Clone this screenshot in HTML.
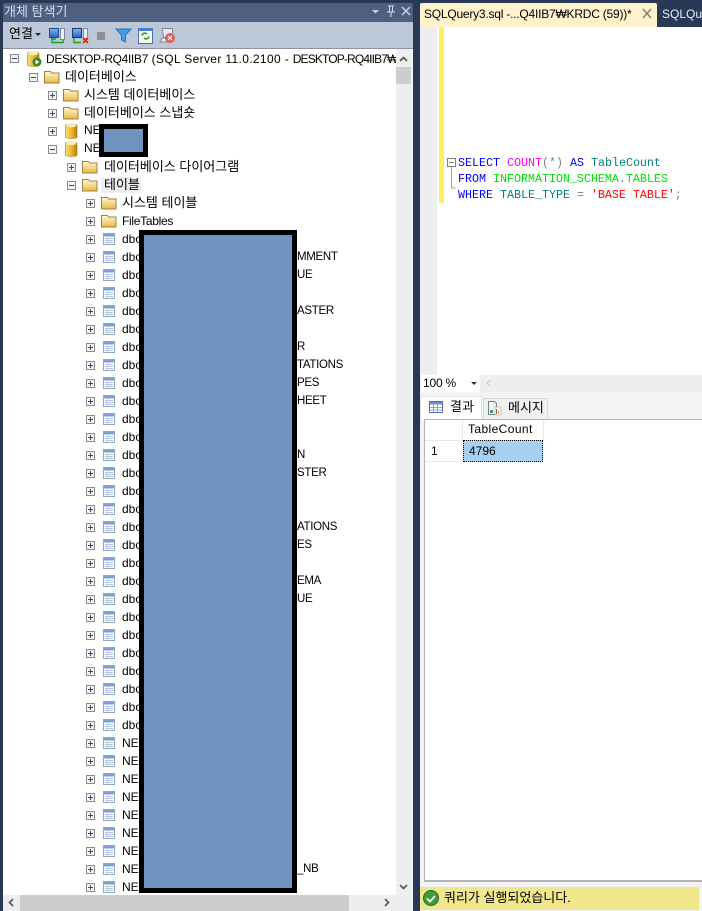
<!DOCTYPE html>
<html lang="ko">
<head>
<meta charset="utf-8">
<title>SSMS</title>
<style>
html,body{margin:0;padding:0}
body{width:702px;height:911px;position:relative;overflow:hidden;background:#293955;font-family:"Liberation Sans","Noto Sans CJK KR",sans-serif;font-size:12px;color:#000}
div{position:absolute;box-sizing:border-box}
.t{white-space:nowrap;line-height:16px;height:16px;font-size:12px}
.h{font-size:13px}
.u{font-size:11.5px;letter-spacing:-.3px}
.c{font-family:"Liberation Mono",monospace;font-size:11.67px;line-height:16px;white-space:pre;left:458px;height:16px}
.b{color:#0000ff}.m{color:#ff00ff}.g{color:#00e000}.e{color:#008080}.x{color:#808080}.r{color:#ff0000}
svg{position:absolute;left:0;top:0}
</style>
</head>
<body>
<!-- left panel -->
<div style="left:3px;top:3px;width:410px;height:19px;background:#4d6082;border-radius:2px 2px 0 0"></div>
<div class="t h" style="left:4px;top:4px;color:#d5dce8">개체 탐색기</div>
<div style="left:3px;top:22px;width:410px;height:27px;background:#bcc7d8"></div>
<div class="t h" style="left:9px;top:26px">연결</div>
<div style="left:3px;top:49px;width:410px;height:862px;background:#fff"></div>
<div style="left:3px;top:48px;width:410px;height:1px;background:#8a93a3"></div>
<div style="left:396px;top:49px;width:15px;height:846px;background:#eeeeee"></div>
<div style="left:396px;top:67px;width:15px;height:17px;background:#cdcdcd"></div>
<div style="left:3px;top:895px;width:408px;height:16px;background:#eeeeee"></div>
<div style="left:20px;top:895px;width:329px;height:16px;background:#cdcdcd"></div>
<div style="left:411px;top:49px;width:2px;height:862px;background:#f4f5f8"></div>

<!-- tree text -->
<div style="left:0;top:1px;width:396px;height:894px;overflow:hidden">
<div class="t" style="left:46px;top:50px"><span style="letter-spacing:-.35px">DESKTOP-RQ4IIB7</span><span style="letter-spacing:.35px"> (SQL Server 11.0.2100 - </span><span style="letter-spacing:-.85px">DESKTOP-RQ4IIB7</span>₩KRDC)</div>
<div class="t h" style="left:65px;top:68px">데이터베이스</div>
<div class="t h" style="left:84px;top:86px">시스템 데이터베이스</div>
<div class="t h" style="left:84px;top:104px">데이터베이스 스냅숏</div>
<div class="t" style="left:84px;top:121px">NE</div>
<div class="t" style="left:84px;top:139px">NE</div>
<div class="t h" style="left:104px;top:158px">데이터베이스 다이어그램</div>
<div style="left:101px;top:176px;width:40px;height:16px;background:#eeeeee"></div>
<div class="t h" style="left:104px;top:176px">테이블</div>
<div class="t h" style="left:122px;top:194px">시스템 테이블</div>
<div class="t" style="left:122px;top:212px;letter-spacing:-.3px">FileTables</div>
<div class="t" style="left:122px;top:230px">dbo</div>
<div class="t" style="left:122px;top:248px">dbo</div>
<div class="t" style="left:122px;top:266px">dbo</div>
<div class="t" style="left:122px;top:284px">dbo</div>
<div class="t" style="left:122px;top:302px">dbo</div>
<div class="t" style="left:122px;top:320px">dbo</div>
<div class="t" style="left:122px;top:338px">dbo</div>
<div class="t" style="left:122px;top:356px">dbo</div>
<div class="t" style="left:122px;top:374px">dbo</div>
<div class="t" style="left:122px;top:392px">dbo</div>
<div class="t" style="left:122px;top:410px">dbo</div>
<div class="t" style="left:122px;top:428px">dbo</div>
<div class="t" style="left:122px;top:446px">dbo</div>
<div class="t" style="left:122px;top:464px">dbo</div>
<div class="t" style="left:122px;top:482px">dbo</div>
<div class="t" style="left:122px;top:500px">dbo</div>
<div class="t" style="left:122px;top:518px">dbo</div>
<div class="t" style="left:122px;top:536px">dbo</div>
<div class="t" style="left:122px;top:554px">dbo</div>
<div class="t" style="left:122px;top:572px">dbo</div>
<div class="t" style="left:122px;top:590px">dbo</div>
<div class="t" style="left:122px;top:608px">dbo</div>
<div class="t" style="left:122px;top:626px">dbo</div>
<div class="t" style="left:122px;top:644px">dbo</div>
<div class="t" style="left:122px;top:662px">dbo</div>
<div class="t" style="left:122px;top:680px">dbo</div>
<div class="t" style="left:122px;top:698px">dbo</div>
<div class="t" style="left:122px;top:716px">dbo</div>
<div class="t" style="left:122px;top:734px">NE</div>
<div class="t" style="left:122px;top:752px">NE</div>
<div class="t" style="left:122px;top:770px">NE</div>
<div class="t" style="left:122px;top:788px">NE</div>
<div class="t" style="left:122px;top:806px">NE</div>
<div class="t" style="left:122px;top:824px">NE</div>
<div class="t" style="left:122px;top:842px">NE</div>
<div class="t" style="left:122px;top:860px">NE</div>
<div class="t" style="left:122px;top:878px">NE</div>
<div class="t u" style="left:297px;top:248px">MMENT</div>
<div class="t u" style="left:297px;top:266px">UE</div>
<div class="t u" style="left:297px;top:302px">ASTER</div>
<div class="t u" style="left:297px;top:338px">R</div>
<div class="t u" style="left:297px;top:356px">TATIONS</div>
<div class="t u" style="left:297px;top:374px">PES</div>
<div class="t u" style="left:297px;top:392px">HEET</div>
<div class="t u" style="left:297px;top:446px">N</div>
<div class="t u" style="left:297px;top:464px">STER</div>
<div class="t u" style="left:297px;top:518px">ATIONS</div>
<div class="t u" style="left:297px;top:536px">ES</div>
<div class="t u" style="left:297px;top:572px">EMA</div>
<div class="t u" style="left:297px;top:590px">UE</div>
<div class="t u" style="left:297px;top:860px">_NB</div>
</div>

<!-- right pane -->
<div style="left:420px;top:3px;width:237px;height:24px;background:#fff2cc;border-radius:2px 2px 0 0"></div>
<div class="t" style="left:424px;top:6px;letter-spacing:-.22px">SQLQuery3.sql -...Q4IIB7₩KRDC (59))*</div>
<div style="left:657px;top:3px;width:45px;height:24px;background:#293955"></div>
<div class="t" style="left:662px;top:6px;color:#e8edf5">SQLQu</div>
<div style="left:420px;top:27px;width:282px;height:348px;background:#fff"></div>
<div style="left:420px;top:27px;width:17px;height:348px;background:#eeeeee"></div>
<div style="left:439px;top:27px;width:5px;height:176px;background:#ffee62"></div>
<div class="c" style="top:155px"><span class="b">SELECT</span> <span class="m">COUNT</span><span class="x">(*)</span> <span class="b">AS</span> <span class="e">TableCount</span></div>
<div class="c" style="top:171px"><span class="b">FROM</span> <span class="g">INFORMATION_SCHEMA</span><span class="x">.</span><span class="g">TABLES</span></div>
<div class="c" style="top:187px"><span class="b">WHERE</span> <span class="e">TABLE_TYPE</span> <span class="x">=</span> <span class="r">'BASE TABLE'</span><span class="x">;</span></div>

<div style="left:420px;top:375px;width:282px;height:20px;background:#eeeeee"></div>
<div style="left:421px;top:375px;width:59px;height:17px;background:#fff"></div>
<div class="t" style="left:423px;top:375px;letter-spacing:-.2px">100 %</div>
<div style="left:420px;top:392px;width:282px;height:519px;background:#f3f3f6"></div>
<div style="left:420px;top:396px;width:62px;height:24px;background:#fff;border:1px solid #e2e2e2;border-bottom:0"></div>
<div style="left:483px;top:398px;width:65px;height:21px;background:#f0f0f0;border:1px solid #d8d8d8;border-bottom:0"></div>
<div class="t h" style="left:450px;top:399px">결과</div>
<div class="t h" style="left:508px;top:400px">메시지</div>
<div style="left:424px;top:419px;width:278px;height:463px;background:#fff;border:solid #b4b4b4;border-width:1px 0 2px 1px"></div>
<div style="left:425px;top:420px;width:38px;height:21px;border-right:1px solid #e8e8e8;border-bottom:1px solid #e8e8e8"></div>
<div style="left:463px;top:420px;width:81px;height:21px;border-right:1px solid #e8e8e8;border-bottom:1px solid #e8e8e8"></div>
<div style="left:425px;top:441px;width:38px;height:21px;border-bottom:1px solid #e8e8e8"></div>
<div class="t" style="left:468px;top:421px;letter-spacing:.4px">TableCount</div>
<div class="t" style="left:431px;top:443px">1</div>
<div style="left:463px;top:440px;width:80px;height:22px;background:#a6cff0;border:1px dotted #000"></div>
<div class="t" style="left:469px;top:443px">4796</div>

<div style="left:420px;top:887px;width:279px;height:23px;background:#f0e68c"></div>
<div class="t h" style="left:444px;top:890px">쿼리가 실행되었습니다.</div>

<!-- redaction blocks -->
<div style="left:99px;top:124px;width:49px;height:33px;background:#7094c0;border:5px solid #000"></div>
<div style="left:139px;top:230px;width:158px;height:663px;background:#7094c0;border:5px solid #000"></div>

<!-- icons -->
<svg width="702" height="911" viewBox="0 0 702 911" xmlns="http://www.w3.org/2000/svg">
<defs>
<linearGradient id="fo" x1="0" y1="0" x2="0" y2="1"><stop offset="0" stop-color="#fff8d8"/><stop offset="1" stop-color="#e8b840"/></linearGradient>
<linearGradient id="cy" x1="0" y1="0" x2="1" y2="0"><stop offset="0" stop-color="#f8e080"/><stop offset=".6" stop-color="#e8b020"/><stop offset="1" stop-color="#b07c10"/></linearGradient>
<linearGradient id="mo" x1="0" y1="0" x2="0" y2="1"><stop offset="0" stop-color="#7fb8f0"/><stop offset="1" stop-color="#2060c0"/></linearGradient>
<g id="plus"><rect x=".5" y=".5" width="8" height="8" fill="#f4f4f4" stroke="#8c8c8c"/><path d="M2 4.5h5M4.500 2v5" stroke="#2a4a90" fill="none"/></g>
<g id="minus"><rect x=".5" y=".5" width="8" height="8" fill="#f4f4f4" stroke="#8c8c8c"/><path d="M2 4.500h5" stroke="#2a4a90" fill="none"/></g>
<g id="folder"><path d="M.5 3V1.500h6l1 1.500h7.500v10H.5z" fill="url(#fo)" stroke="#a08040"/></g>
<g id="table"><rect x=".5" y=".5" width="11" height="11" fill="#fff" stroke="#8fa8c8"/><rect x="1" y="1" width="10" height="2.500" fill="#7f9fd8"/><path d="M2 5.500h8M2 7.500h8M2 9.500h8" stroke="#b0c0d8" fill="none"/><path d="M4.500 4v7" stroke="#c8d4e4" fill="none"/></g>
<g id="db"><path d="M0 2.500C0 .5 11.500 .5 11.500 2.500V14C11.500 16 0 16 0 14z" fill="url(#cy)" stroke="#a07810" stroke-width=".6"/><ellipse cx="5.750" cy="2.500" rx="5" ry="1.700" fill="#fdf0b0"/></g>
</defs>

<!-- title buttons -->
<path d="M372 10h7l-3.500 3.500z" fill="#c8d0de"/>
<path d="M388 6h6M389.500 6v6M392.500 6v6M387 12h8M391 12v5" stroke="#d5dce8" fill="none"/>
<path d="M402 7l8 8M410 7l-8 8" stroke="#c8d0de" stroke-width="1.500" fill="none"/>
<path d="M643 9l8 9M651 9l-8 9" stroke="#8a8270" stroke-width="1.600" fill="none"/>

<!-- toolbar -->
<path d="M35 33h6l-3 3z" fill="#222"/>
<rect x="49.500" y="28.500" width="9" height="9" fill="url(#mo)" stroke="#1c4a94"/>
<rect x="60.500" y="28.500" width="4" height="11" fill="#eef2f8" stroke="#7a8aa0"/>
<path d="M51 39h5M52 38v4.500h11v-3" stroke="#20a020" stroke-width="1.400" fill="none"/>
<rect x="72.500" y="28.500" width="9" height="9" fill="url(#mo)" stroke="#1c3a74"/>
<rect x="83.500" y="28.500" width="4" height="10" fill="#eef2f8" stroke="#7a8aa0"/>
<path d="M74 38v4.500h7" stroke="#20a020" stroke-width="1.400" fill="none"/>
<path d="M83 38l5 5M88 38l-5 5" stroke="#e02010" stroke-width="1.600" fill="none"/>
<rect x="97" y="32" width="8" height="8" fill="#8f8f8f"/>
<path d="M116 29h15l-5.500 6v7l-4-2v-5z" fill="#4a9ae0" stroke="#2a70b8"/>
<rect x="138.500" y="28.500" width="14" height="15" fill="#f4f8f0" stroke="#4a70b0"/>
<rect x="138" y="28" width="15" height="3" fill="#4a80c8"/>
<path d="M142 35.500a3 3 0 0 1 5-1.500M149 36.500a3 3 0 0 1-5 1.500" stroke="#2a9a2a" stroke-width="1.600" fill="none"/>
<path d="M162.500 28.500h10v9h-9zM160 42h10l2-4h-10z" fill="#e6e9ee" stroke="#80889a"/>
<circle cx="170" cy="38" r="5" fill="#e06060"/>
<path d="M168 36l4 4M172 36l-4 4" stroke="#fff" fill="none"/>

<!-- tree icons -->
<use href="#minus" x="10" y="54"/><use href="#db" x="27.500" y="51"/>
<circle cx="37" cy="62" r="4.500" fill="#2a8a2a"/><path d="M35.500 59.500l4 2.500-4 2.500z" fill="#fff"/>
<use href="#minus" x="29" y="73"/><use href="#folder" x="44" y="70"/>
<use href="#plus" x="48" y="91"/><use href="#folder" x="63" y="88"/>
<use href="#plus" x="48" y="109"/><use href="#folder" x="63" y="106"/>
<use href="#plus" x="48" y="127"/><use href="#db" x="65.500" y="123"/>
<use href="#minus" x="48" y="145"/><use href="#db" x="65.500" y="141"/>
<use href="#plus" x="67" y="163"/><use href="#folder" x="82" y="160"/>
<use href="#minus" x="67" y="181"/><use href="#folder" x="82" y="178"/>
<use href="#plus" x="86" y="199"/><use href="#folder" x="101" y="196"/>
<use href="#plus" x="86" y="217"/><use href="#folder" x="101" y="214"/>
<use href="#plus" x="86" y="235"/><use href="#table" x="103" y="233"/>
<use href="#plus" x="86" y="253"/><use href="#table" x="103" y="251"/>
<use href="#plus" x="86" y="271"/><use href="#table" x="103" y="269"/>
<use href="#plus" x="86" y="289"/><use href="#table" x="103" y="287"/>
<use href="#plus" x="86" y="307"/><use href="#table" x="103" y="305"/>
<use href="#plus" x="86" y="325"/><use href="#table" x="103" y="323"/>
<use href="#plus" x="86" y="343"/><use href="#table" x="103" y="341"/>
<use href="#plus" x="86" y="361"/><use href="#table" x="103" y="359"/>
<use href="#plus" x="86" y="379"/><use href="#table" x="103" y="377"/>
<use href="#plus" x="86" y="397"/><use href="#table" x="103" y="395"/>
<use href="#plus" x="86" y="415"/><use href="#table" x="103" y="413"/>
<use href="#plus" x="86" y="433"/><use href="#table" x="103" y="431"/>
<use href="#plus" x="86" y="451"/><use href="#table" x="103" y="449"/>
<use href="#plus" x="86" y="469"/><use href="#table" x="103" y="467"/>
<use href="#plus" x="86" y="487"/><use href="#table" x="103" y="485"/>
<use href="#plus" x="86" y="505"/><use href="#table" x="103" y="503"/>
<use href="#plus" x="86" y="523"/><use href="#table" x="103" y="521"/>
<use href="#plus" x="86" y="541"/><use href="#table" x="103" y="539"/>
<use href="#plus" x="86" y="559"/><use href="#table" x="103" y="557"/>
<use href="#plus" x="86" y="577"/><use href="#table" x="103" y="575"/>
<use href="#plus" x="86" y="595"/><use href="#table" x="103" y="593"/>
<use href="#plus" x="86" y="613"/><use href="#table" x="103" y="611"/>
<use href="#plus" x="86" y="631"/><use href="#table" x="103" y="629"/>
<use href="#plus" x="86" y="649"/><use href="#table" x="103" y="647"/>
<use href="#plus" x="86" y="667"/><use href="#table" x="103" y="665"/>
<use href="#plus" x="86" y="685"/><use href="#table" x="103" y="683"/>
<use href="#plus" x="86" y="703"/><use href="#table" x="103" y="701"/>
<use href="#plus" x="86" y="721"/><use href="#table" x="103" y="719"/>
<use href="#plus" x="86" y="739"/><use href="#table" x="103" y="737"/>
<use href="#plus" x="86" y="757"/><use href="#table" x="103" y="755"/>
<use href="#plus" x="86" y="775"/><use href="#table" x="103" y="773"/>
<use href="#plus" x="86" y="793"/><use href="#table" x="103" y="791"/>
<use href="#plus" x="86" y="811"/><use href="#table" x="103" y="809"/>
<use href="#plus" x="86" y="829"/><use href="#table" x="103" y="827"/>
<use href="#plus" x="86" y="847"/><use href="#table" x="103" y="845"/>
<use href="#plus" x="86" y="865"/><use href="#table" x="103" y="863"/>
<use href="#plus" x="86" y="883"/><use href="#table" x="103" y="881"/>

<!-- scroll arrows -->
<path d="M400 61l3.500-3.500 3.500 3.500" stroke="#555" stroke-width="1.600" fill="none"/>
<path d="M400 885l3.500 3.500 3.500-3.500" stroke="#555" stroke-width="1.600" fill="none"/>
<path d="M13 899l-3.500 3.500 3.500 3.500" stroke="#555" stroke-width="1.600" fill="none"/>
<path d="M385 899l3.500 3.500-3.500 3.500" stroke="#555" stroke-width="1.600" fill="none"/>

<!-- outlining -->
<rect x="447.500" y="158.500" width="8" height="8" fill="#fff" stroke="#808080"/>
<path d="M449 162.500h5" stroke="#808080" fill="none"/>
<path d="M451.500 167v21h4" stroke="#a0a0a0" fill="none"/>

<!-- zoom bar -->
<path d="M471 382h6l-3 3z" fill="#333"/>
<path d="M490 380l-3 3 3 3" stroke="#c8c8c8" fill="none"/>

<!-- results tabs -->
<rect x="429.500" y="401.500" width="13" height="11" fill="#fff" stroke="#5070a8"/>
<rect x="430" y="402" width="12" height="2.500" fill="#7090c8"/>
<path d="M430 407.500h12M430 410h12M433.500 404v8M437.500 404v8" stroke="#90a4c4" fill="none"/>
<path d="M488.500 401.500h6l2 2v11h-8z" fill="#eef2f4" stroke="#708090"/>
<rect x="495" y="407" width="6" height="8" fill="#fff" stroke="#a0a0a0" stroke-width=".6"/>
<path d="M490 410h3v3h-3z" fill="#40a040"/>
<path d="M496 409h1v5h-1z" fill="#d04040"/><path d="M498 411h1v3h-1z" fill="#e0a020"/>

<!-- status icon -->
<circle cx="431" cy="898" r="7.500" fill="#3f9a3c" stroke="#2a6a2a"/>
<path d="M427 898.500l3 3 5-5.500" stroke="#fff" stroke-width="1.800" fill="none"/>
</svg>
</body>
</html>
